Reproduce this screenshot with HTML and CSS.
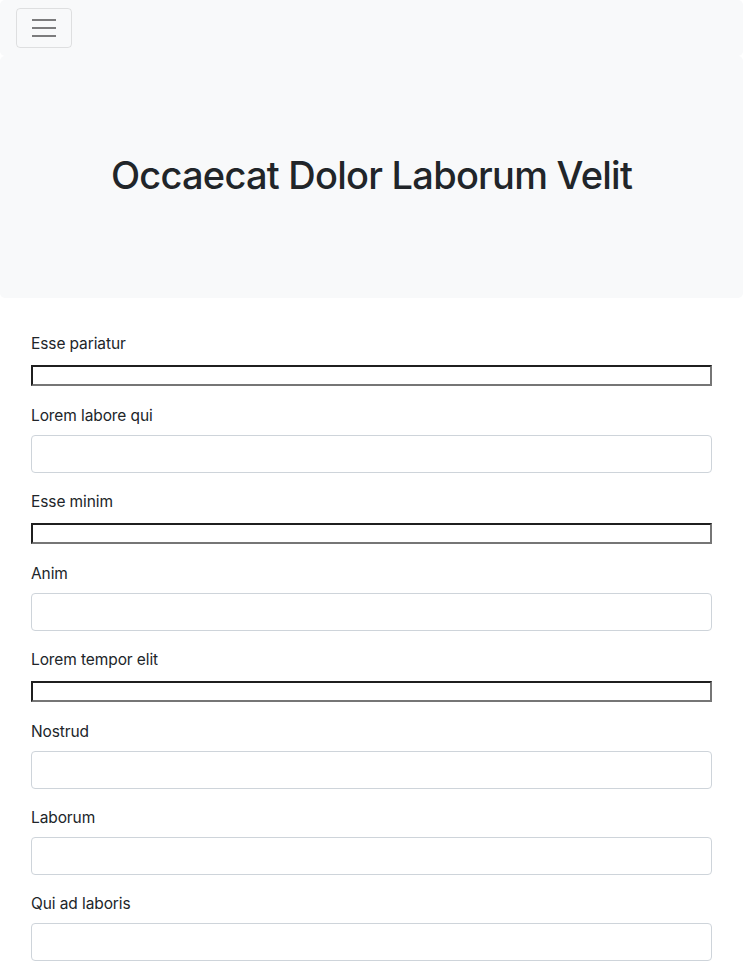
FILE: index.html
```html
<!DOCTYPE html>
<html lang="en">
<head>
<meta charset="utf-8">
<title>Form</title>
<link rel="stylesheet" href="styles.css">
</head>
<body>
<nav class="navbar">
  <button class="toggler" type="button" aria-label="Toggle navigation">
    <svg class="toggler-icon" width="30" height="30" viewBox="0 0 30 30" aria-hidden="true"><path stroke="rgba(0,0,0,0.5)" stroke-linecap="square" stroke-width="2" d="M4 7h22M4 15h22M4 23h22"/></svg>
  </button>
</nav>
<header class="hero">
  <h1 class="hero-title">Occaecat Dolor Laborum Velit</h1>
</header>
<main class="content">
  <form class="form">
    <div class="group"><label class="label">Esse pariatur</label><div class="raw-wrap"><input class="raw-input" type="text"></div></div>
    <div class="group"><label class="label">Lorem labore qui</label><input class="control" type="text"></div>
    <div class="group"><label class="label">Esse minim</label><div class="raw-wrap"><input class="raw-input" type="text"></div></div>
    <div class="group"><label class="label">Anim</label><input class="control" type="text"></div>
    <div class="group"><label class="label">Lorem tempor elit</label><div class="raw-wrap"><input class="raw-input" type="text"></div></div>
    <div class="group"><label class="label">Nostrud</label><input class="control" type="text"></div>
    <div class="group"><label class="label">Laborum</label><input class="control" type="text"></div>
    <div class="group"><label class="label">Qui ad laboris</label><input class="control" type="text"></div>
  </form>
</main>
</body>
</html>
```
FILE: styles.css
```css
* { box-sizing: border-box; }
html, body { margin: 0; padding: 0; }
body {
  font-family: Inter, "Helvetica Neue", Arial, sans-serif;
  font-size: 16px;
  line-height: 1.5;
  color: #212529;
  background: #fff;
}
.navbar {
  background: #f8f9fa;
  padding: 8px 16px;
  border-radius: 5px;
  display: flex;
}
.toggler {
  width: 56px;
  height: 40px;
  padding: 4px 12px;
  background: transparent;
  border: 1px solid rgba(0,0,0,0.1);
  border-radius: 4px;
  display: flex;
  align-items: center;
  justify-content: center;
}
.toggler-icon { display: block; }
.hero {
  background: #f8f9fa;
  border-radius: 5px;
  padding: 95px 32px 99px;
  margin-bottom: 33px;
  text-align: center;
}
.hero-title {
  margin: 0;
  font-size: 38px;
  font-weight: 500;
  line-height: 48px;
  letter-spacing: -0.75px;
}
.content { padding: 0 31px; }
.form { margin: 0; }
.group { margin-bottom: 16px; }
.label {
  display: block;
  margin-bottom: 8px;
  padding-top: 2px;
  font-size: 15.5px;
  line-height: 22px;
  letter-spacing: -0.1px;
}
.raw-wrap {
  padding: 2px 0 0;
  height: 24px;
}
.raw-input {
  display: block;
  width: 100%;
  height: 21px;
  margin: 0;
  padding: 1px 2px;
  border-style: solid;
  border-width: 2px;
  border-color: #1f1f1f #767676 #767676 #1f1f1f;
  background: #fff;
  font: 13px Arial, sans-serif;
}
.control {
  display: block;
  width: 100%;
  height: 38px;
  padding: 6px 12px;
  border: 1px solid #ced4da;
  border-radius: 4px;
  background: #fff;
  font: inherit;
  color: #495057;
}
```
